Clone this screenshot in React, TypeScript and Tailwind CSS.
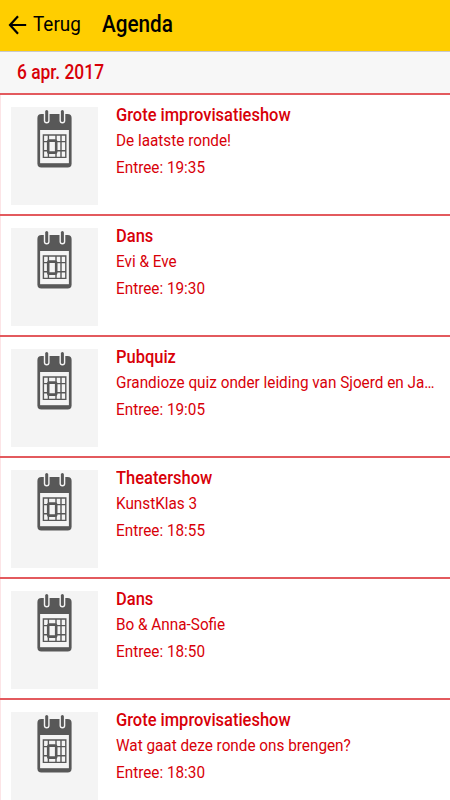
import React from "react";

interface AgendaItem {
     id: number;
     title: string;
     description: string;
     time: string;
}

const items: AgendaItem[] = [
     { id: 1, title: "Grote improvisatieshow", description: "De laatste ronde!", time: "19:35" },
     { id: 2, title: "Dans", description: "Evi & Eve", time: "19:30" },
     { id: 3, title: "Pubquiz", description: "Grandioze quiz onder leiding van Sjoerd en Ja…", time: "19:05" },
     { id: 4, title: "Theatershow", description: "KunstKlas 3", time: "18:55" },
     { id: 5, title: "Dans", description: "Bo & Anna-Sofie", time: "18:50" },
     { id: 6, title: "Grote improvisatieshow", description: "Wat gaat deze ronde ons brengen?", time: "18:30" },
];

function CalendarIcon() {
     return (
          <svg className="w-9 h-[58px]" viewBox="-0.4 0 36 58" fill="none">
               <rect x="0" y="4" width="34.2" height="53.4" rx="4" fill="#585858" />
               <rect x="2.7" y="20" width="28.8" height="33.2" fill="#f4f4f4" />
               {/* binder rings */}
               <rect x="6.4" y="-1" width="5.8" height="14.5" rx="2.9" fill="#f4f4f4" />
               <rect x="22.1" y="-1" width="5.8" height="14.5" rx="2.9" fill="#f4f4f4" />
               <rect x="7.8" y="0" width="3" height="12" rx="1.5" fill="#585858" />
               <rect x="23.5" y="0" width="3" height="12" rx="1.5" fill="#585858" />
               {/* day grid */}
               <path d="M6 25H28.4V47.4H6ZM6 31.6H28.4M6 40.8H28.4M11 25V47.4M18.6 25V47.4M23.6 25V47.4" stroke="#585858" strokeWidth="1.4" />
               <rect x="10.8" y="30.6" width="8" height="12" rx="1.2" stroke="#585858" strokeWidth="2.6" fill="#f4f4f4" />
          </svg>
     );
}

export default function App() {
     return (
          <div className="h-[800px] w-[450px] overflow-hidden bg-white font-['Roboto',sans-serif] text-[#d80008]">

               {/* Header */}
               <header className="flex h-[51px] items-center bg-[#ffce00] pb-0.5 pl-2 text-black whitespace-nowrap">
                    <svg className="mt-px w-[19px] h-5" viewBox="0 0 19 20" fill="none" stroke="currentColor" strokeWidth="2.2">
                         <path d="M18.2 10H2M10 1.2L2 10L10 18.8" />
                    </svg>
                    <span className="ml-1.5 w-[69px]">
                         <span className="inline-block origin-left scale-x-[0.9] text-[21px] leading-6">Terug</span>
                    </span>
                    <h1 className="origin-left scale-x-[0.9] text-[23px] leading-6 font-medium">Agenda</h1>
               </header>

               {/* Date */}
               <div className="flex h-[42px] items-center border-t border-[#c8c8cc] bg-[#f7f7f7] pb-0.5 pl-[17px]">
                    <h2 className="origin-left scale-x-[0.87] text-xl leading-6 font-medium">6 apr. 2017</h2>
               </div>

               <ul>
                    {items.map((item) => (
                         <li key={item.id} className="flex h-[121px] border-t-2 border-[#e35a5e] whitespace-nowrap">
                              <div className="w-px shrink-0 bg-[#fce4e6]" />
                              <div className="mt-3 ml-[10px] flex h-[98px] w-[87px] shrink-0 bg-[#f4f4f4] pt-[3px] pl-[26px]">
                                   <CalendarIcon />
                              </div>
                              <div className="mt-3 ml-[18px] flex flex-col items-start">
                                   <h3 className="origin-left scale-x-[0.915] text-lg leading-4 font-medium">{item.title}</h3>
                                   <p className="mt-[7px] origin-left scale-x-[0.9] text-[17px] leading-5">{item.description}</p>
                                   <p className="mt-[7px] origin-left scale-x-[0.9] text-[17px] leading-5">Entree: {item.time}</p>
                              </div>
                         </li>
                    ))}
               </ul>
          </div>
     );
}
